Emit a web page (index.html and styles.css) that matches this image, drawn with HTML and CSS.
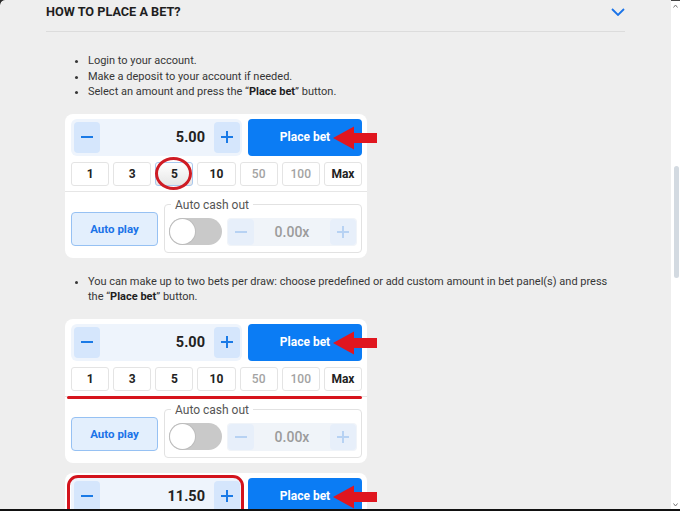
FILE: index.html
```html
<!DOCTYPE html>
<html lang="en">
<head>
  <meta charset="UTF-8" />
  <meta name="viewport" content="width=device-width, initial-scale=1.0"/>
  <title>How to place a bet</title>
  <link rel="stylesheet" href="styles.css">
</head>
<body>

<div class="window">
  <div class="page">
    <section class="faq">
      <div class="faq-head">
        <h2>How to place a bet?</h2>
        <svg class="chevron" width="14" height="8" viewBox="0 0 14 8"><polyline points="1,1 7,7 13,1" fill="none" stroke="#1a73e8" stroke-width="1.8"/></svg>
      </div>

      <ul class="steps">
        <li>Login to your account.</li>
        <li>Make a deposit to your account if needed.</li>
        <li>Select an amount and press the “<b>Place bet</b>” button.</li>
      </ul>

      <!-- bet panel with the chosen chip circled -->
      <div class="bet-panel">
        <div class="bet-row">
          <div class="amount">
            <button class="step"><span class="minus"></span></button>
            <span class="value">5.00</span>
            <button class="step"><span class="plus"></span></button>
          </div>
          <button class="place-bet">Place bet</button>
        </div>
        <div class="chips">
          <button class="chip">1</button>
          <button class="chip">3</button>
          <button class="chip selected">5<span class="ring"></span></button>
          <button class="chip">10</button>
          <button class="chip off">50</button>
          <button class="chip off">100</button>
          <button class="chip">Max</button>
        </div>
        <div class="auto-row">
          <button class="auto-play">Auto play</button>
          <fieldset class="cashout">
            <legend>Auto cash out</legend>
            <span class="toggle"><span class="knob"></span></span>
            <div class="amount small">
              <button class="step"><span class="minus"></span></button>
              <span class="value">0.00x</span>
              <button class="step"><span class="plus"></span></button>
            </div>
          </fieldset>
        </div>
        <svg class="pointer" width="44" height="25" viewBox="0 0 44 25"><path d="M0 12 L21 0.5 L21 7 L44 7 L44 17 L21 17 L21 23.5 Z" fill="#e0161f"/></svg>
      </div>

      <ul class="steps">
        <li>You can make up to two bets per draw: choose predefined or add custom amount in bet panel(s) and press the “<b>Place bet</b>” button.</li>
      </ul>

      <div class="bet-pair">
        <!-- quick amounts underlined -->
        <div class="bet-panel">
          <div class="bet-row">
            <div class="amount">
              <button class="step"><span class="minus"></span></button>
              <span class="value">5.00</span>
              <button class="step"><span class="plus"></span></button>
            </div>
            <button class="place-bet">Place bet</button>
          </div>
          <div class="chips">
            <button class="chip">1</button>
            <button class="chip">3</button>
            <button class="chip">5</button>
            <button class="chip">10</button>
            <button class="chip off">50</button>
            <button class="chip off">100</button>
            <button class="chip">Max</button>
            <span class="underline"></span>
          </div>
          <div class="auto-row">
            <button class="auto-play">Auto play</button>
            <fieldset class="cashout">
              <legend>Auto cash out</legend>
              <span class="toggle"><span class="knob"></span></span>
              <div class="amount small">
                <button class="step"><span class="minus"></span></button>
                <span class="value">0.00x</span>
                <button class="step"><span class="plus"></span></button>
              </div>
            </fieldset>
          </div>
          <svg class="pointer" width="44" height="25" viewBox="0 0 44 25"><path d="M0 12 L21 0.5 L21 7 L44 7 L44 17 L21 17 L21 23.5 Z" fill="#e0161f"/></svg>
        </div>

        <!-- custom amount outlined -->
        <div class="bet-panel">
          <div class="bet-row">
            <div class="amount framed">
              <button class="step"><span class="minus"></span></button>
              <span class="value">11.50</span>
              <button class="step"><span class="plus"></span></button>
            </div>
            <button class="place-bet">Place bet</button>
          </div>
          <div class="chips">
            <button class="chip">1</button>
            <button class="chip">3</button>
            <button class="chip">5</button>
            <button class="chip">10</button>
            <button class="chip off">50</button>
            <button class="chip off">100</button>
            <button class="chip">Max</button>
          </div>
          <svg class="pointer" width="44" height="25" viewBox="0 0 44 25"><path d="M0 12 L21 0.5 L21 7 L44 7 L44 17 L21 17 L21 23.5 Z" fill="#e0161f"/></svg>
        </div>
      </div>
    </section>
  </div>

  <div class="scrollbar">
    <svg class="arrow-up" width="5" height="4" viewBox="0 0 5 4"><polyline points="0.5,3.5 2.5,1 4.5,3.5" fill="none" stroke="#777" stroke-width="1"/></svg>
    <div class="thumb"></div>
    <svg class="arrow-down" width="5" height="4" viewBox="0 0 5 4"><polyline points="0.5,0.5 2.5,3 4.5,0.5" fill="none" stroke="#777" stroke-width="1"/></svg>
  </div>
</div>
<div class="taskbar"></div>

</body>
</html>
```

FILE: styles.css
```css
* {
  box-sizing: border-box;
}
body {
  margin: 0;
  background: #2b2b2b;
  font-family: Roboto, "Liberation Sans", Arial, sans-serif;
  overflow: hidden;
}
.window {
  display: flex;
  height: 509px;
  overflow: hidden;
  border-top-left-radius: 5px;
}
.page {
  flex: 1;
  background: #eeeeee;
  border-top-left-radius: 5px;
  overflow: hidden;
}
.faq {
  padding: 0 46px;
}
.faq-head {
  display: flex;
  align-items: center;
  justify-content: space-between;
  height: 32px;
  padding-bottom: 8px;
  border-bottom: 1px solid #dcdcdc;
  margin-bottom: 21px;
}
.faq-head h2 {
  margin: 0;
  font-size: 12.7px;
  font-weight: 700;
  text-transform: uppercase;
  color: #1e1e1e;
}
.chevron {
  display: block;
}
.steps {
  margin: 0 0 14px;
  padding-left: 42px;
  font-size: 11px;
  line-height: 15.5px;
  color: #363636;
}
.steps b {
  color: #1e1e1e;
}

/* bet panel */
.bet-panel {
  position: relative;
  width: 302px;
  margin: 0 0 16px 19px;
  background: #fff;
  border-radius: 8px;
}
.bet-pair {
  display: flex;
  flex-direction: column;
  gap: 10px;
}
.bet-pair .bet-panel {
  margin-bottom: 0;
}
.bet-row {
  display: flex;
  gap: 6px;
  padding: 5px 5px 0 6px;
}
.amount {
  position: relative;
  display: flex;
  align-items: center;
  width: 171px;
  height: 37px;
  padding: 0 2px 0 3px;
  background: #eef4fc;
  border-radius: 6px;
}
.amount .value {
  flex: 1;
  text-align: right;
  padding-right: 9px;
  font-size: 14.5px;
  font-weight: 700;
  color: #222;
}
.step {
  position: relative;
  flex: none;
  width: 26px;
  height: 31px;
  border: none;
  border-radius: 4px;
  background: #d5e6fc;
  padding: 0;
}
.minus,
.plus {
  position: absolute;
  left: 7px;
  top: 14.5px;
  width: 12px;
  height: 2px;
  background: #1a7ae6;
}
.plus::after {
  content: "";
  position: absolute;
  left: 5px;
  top: -5px;
  width: 2px;
  height: 12px;
  background: #1a7ae6;
}
.place-bet {
  flex: 1;
  height: 37px;
  border: none;
  border-radius: 4px;
  background: #0b7cf4;
  color: #fff;
  font-family: inherit;
  font-size: 12px;
  font-weight: 700;
}
.amount.framed::after {
  content: "";
  position: absolute;
  left: -4px;
  right: -2px;
  top: -3px;
  bottom: -4px;
  border: 3px solid #d3131c;
  border-radius: 11px;
}

.chips {
  position: relative;
  display: grid;
  grid-template-columns: repeat(7, 1fr);
  gap: 4px;
  padding: 6px 5px 5px 6px;
  border-bottom: 1px solid #e6e6e6;
}
.chip {
  position: relative;
  height: 24px;
  padding: 0;
  background: #fff;
  border: 1px solid #e4e4e4;
  border-radius: 3px;
  font-family: inherit;
  font-size: 12px;
  font-weight: 700;
  color: #222;
}
.chip.off {
  color: #a3a3a3;
  font-weight: 500;
}
.chip.selected {
  border-color: #a9c8ee;
  background: linear-gradient(#ffffff, #e6e6e6);
}
.ring {
  position: absolute;
  left: -1px;
  right: 0;
  top: -6px;
  bottom: -5px;
  border: 3px solid #cf1b24;
  border-radius: 50%;
}
.underline {
  position: absolute;
  left: 2px;
  right: 5px;
  bottom: -3px;
  height: 3px;
  border-radius: 2px;
  background: #d6141c;
}

.auto-row {
  display: flex;
  align-items: flex-end;
  gap: 6px;
  padding: 6px 5px 5px 6px;
}
.auto-play {
  flex: none;
  width: 87px;
  height: 34px;
  margin-bottom: 7px;
  padding: 0;
  background: #e3effd;
  border: 1px solid #96c1f3;
  border-radius: 4px;
  font-family: inherit;
  font-size: 11.5px;
  font-weight: 700;
  color: #1a73e8;
  white-space: nowrap;
}
.cashout {
  flex: 1;
  min-width: 0;
  display: flex;
  align-items: center;
  gap: 5px;
  margin: 0;
  padding: 6px 4px 6px 4px;
  border: 1px solid #e2e2e2;
  border-radius: 4px;
}
.cashout legend {
  margin-left: 2px;
  padding: 0 4px;
  font-size: 12px;
  line-height: 14px;
  color: #555;
}
.toggle {
  position: relative;
  display: block;
  flex: none;
  width: 53px;
  height: 27px;
  border-radius: 14px;
  background: #c9c9c9;
}
.knob {
  position: absolute;
  left: 1px;
  top: 1px;
  width: 25px;
  height: 25px;
  border-radius: 50%;
  background: #fff;
  box-shadow: 0 0 0 1px #bdbdbd;
}
.amount.small {
  flex: 1;
  width: auto;
  min-width: 0;
  height: 28px;
  padding: 0 1px;
  background: #f0f4f9;
  border-radius: 4px;
}
.amount.small .step {
  height: 26px;
  background: #e7effa;
}
.amount.small .minus,
.amount.small .plus,
.amount.small .plus::after {
  background: #b7d2f3;
}
.amount.small .minus,
.amount.small .plus {
  top: 12px;
}
.amount.small .value {
  text-align: center;
  padding: 0;
  font-size: 14px;
  font-weight: 500;
  color: #9b9b9b;
}
.pointer {
  position: absolute;
  left: 268px;
  top: 12px;
}

/* window scrollbar */
.scrollbar {
  display: flex;
  flex-direction: column;
  align-items: center;
  width: 9px;
  background: #fff;
  border-top: 1px solid #444;
}
.arrow-up {
  margin-top: 3px;
}
.thumb {
  width: 5px;
  height: 112px;
  margin-top: 158px;
  margin-left: 2px;
  border-radius: 3px;
  background: #d3dae1;
}
.arrow-down {
  margin-top: auto;
  margin-bottom: 2px;
}
.taskbar {
  height: 2px;
  background: #111;
}
```
